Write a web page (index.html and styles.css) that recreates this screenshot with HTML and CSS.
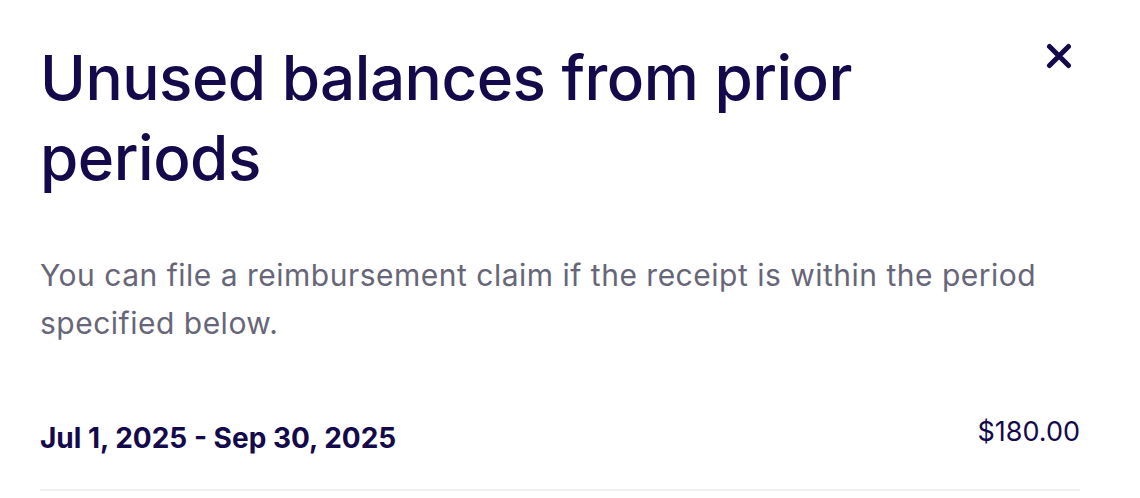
FILE: index.html
```html
<!DOCTYPE html>
<html lang="en">
<head>
    <meta charset="UTF-8">
    <title>Unused balances</title>
    <link rel="stylesheet" href="styles.css">
</head>
<body>
<div class="modal">
    <div class="head">
        <h1 class="title">Unused balances from prior periods</h1>
        <button class="close" aria-label="Close">
            <svg width="26" height="26" viewBox="0 0 26 26">
                <path d="M3.5 3.5L22.5 22.5M22.5 3.5L3.5 22.5" stroke="#140a4b" stroke-width="5" stroke-linecap="round"/>
            </svg>
        </button>
    </div>
    <p class="desc">You can file a reimbursement claim if the receipt is within the period specified below.</p>
    <div class="row">
        <span class="period">Jul 1, 2025 - Sep 30, 2025</span>
        <span class="amount">$180.00</span>
    </div>
</div>
</body>
</html>
```

FILE: styles.css
```css
*{
    margin: 0;
    padding: 0;
    box-sizing: border-box;
}
body{
    background: #fff;
    font-family: Inter, "Liberation Sans", sans-serif;
    color: #140a4b;
}
.modal{
    padding: 38px 60px 0 40px;
}
.head{
    display: flex;
    justify-content: space-between;
    align-items: flex-start;
}
.title{
    font-size: 62px;
    font-weight: 500;
    line-height: 80px;
    letter-spacing: -0.5px;
    max-width: 840px;
}
.close{
    border: none;
    background: none;
    margin-top: 5px;
    margin-right: 8px;
}
.desc{
    margin-top: 53px;
    font-size: 30px;
    line-height: 48px;
    letter-spacing: 0.5px;
    color: #676678;
    max-width: 1030px;
}
.row{
    display: flex;
    justify-content: space-between;
    align-items: flex-start;
    margin-top: 74px;
    padding-bottom: 34px;
    border-bottom: 2px solid #f0f0f2;
}
.period{
    font-size: 28px;
    font-weight: 700;
}
.amount{
    font-size: 27px;
    margin-top: -6px;
}
```
